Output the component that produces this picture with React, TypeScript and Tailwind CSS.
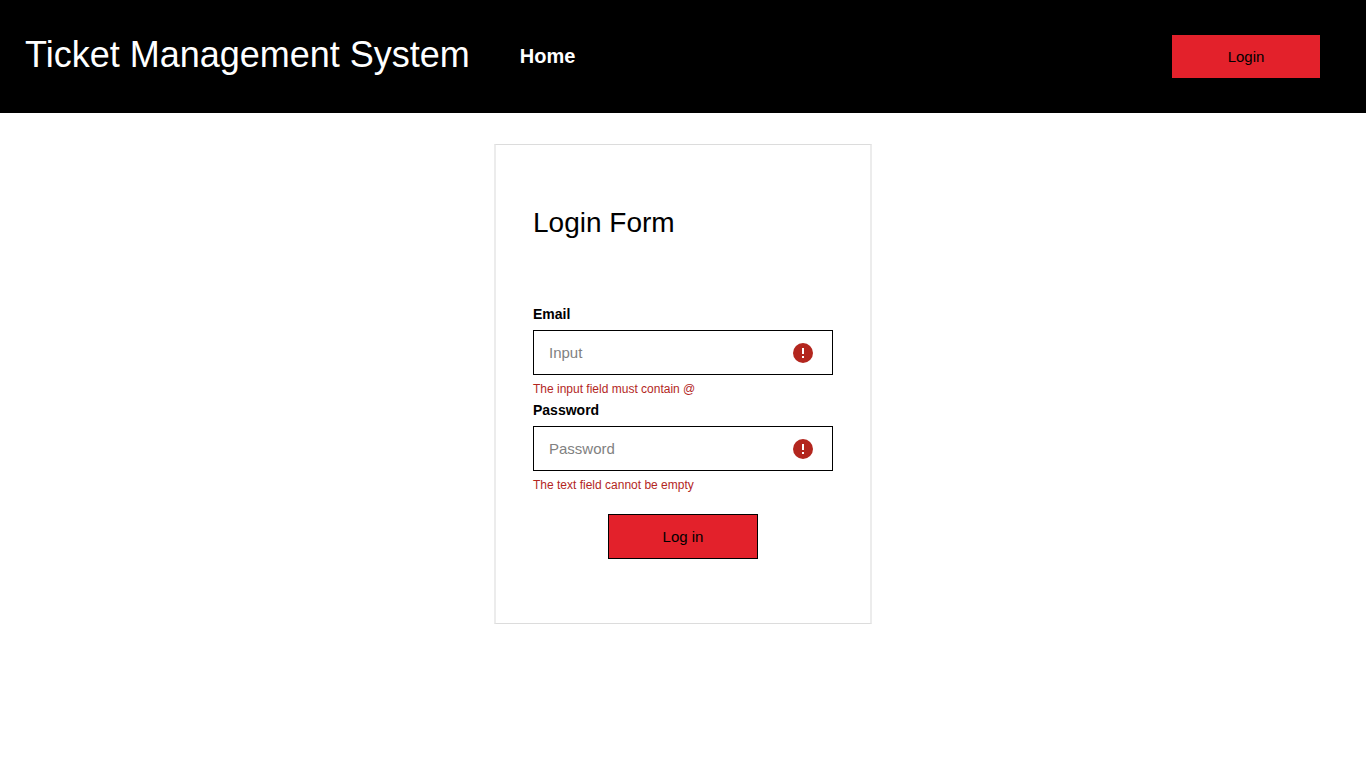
import { useId } from "react";

function ErrorIcon() {
  return (
    <svg viewBox="0 0 20 20" className="size-5 shrink-0" aria-hidden="true">
      <circle cx="10" cy="10" r="10" fill="#b3261e" />
      <path d="M9 5h2v6H9zM9 13h2v2H9z" fill="#fff" />
    </svg>
  );
}

type FieldProps = {
  label: string;
  type: string;
  placeholder: string;
  error: string;
};

function Field({ label, type, placeholder, error }: FieldProps) {
  const id = useId();
  return (
    <div>
      <label htmlFor={id} className="block text-sm leading-4 font-bold">
        {label}
      </label>
      <div className="mt-2 flex h-[45px] items-center border border-black pr-[19px] pl-[15px]">
        <input
          id={id}
          type={type}
          placeholder={placeholder}
          aria-invalid="true"
          aria-describedby={`${id}-error`}
          className="min-w-0 flex-1 bg-transparent pt-0.5 text-[15px] outline-none placeholder:text-[#818181]"
        />
        <ErrorIcon />
      </div>
      <p id={`${id}-error`} className="mt-1.5 text-xs leading-4 text-[#b3261e]">
        {error}
      </p>
    </div>
  );
}

export default function App() {
  return (
    <div className="min-h-screen bg-white font-['Liberation_Sans',Arial,sans-serif] text-black">
      <header className="flex h-[113px] items-center bg-black pr-[46px] pl-[25px] text-white">
        <h1 className="pb-1 text-4xl">Ticket Management System</h1>
        <nav className="ml-[50px] pb-0.5">
          <a href="#home" className="text-xl font-bold">
            Home
          </a>
        </nav>
        <button type="button" className="ml-auto h-[43px] w-[148px] bg-[#e3212b] pt-0.5 text-[15px] text-black">
          Login
        </button>
      </header>
      <main className="px-4 pt-[31px]">
        <form
          onSubmit={(event) => event.preventDefault()}
          className="mx-auto max-w-[378px] border-x-2 border-y border-x-[#ececec] border-y-[#dcdcdc] px-[37px] pt-[62px] pb-16"
        >
          <h2 className="text-[28px] leading-8">Login Form</h2>
          <div className="mt-[67px] flex flex-col gap-[5px]">
            <Field label="Email" type="email" placeholder="Input" error="The input field must contain @" />
            <Field label="Password" type="password" placeholder="Password" error="The text field cannot be empty" />
          </div>
          <button
            type="submit"
            className="mx-auto mt-[21px] block h-[45px] w-[150px] border border-black bg-[#e3212b] pt-0.5 text-[15px]"
          >
            Log in
          </button>
        </form>
      </main>
    </div>
  );
}
